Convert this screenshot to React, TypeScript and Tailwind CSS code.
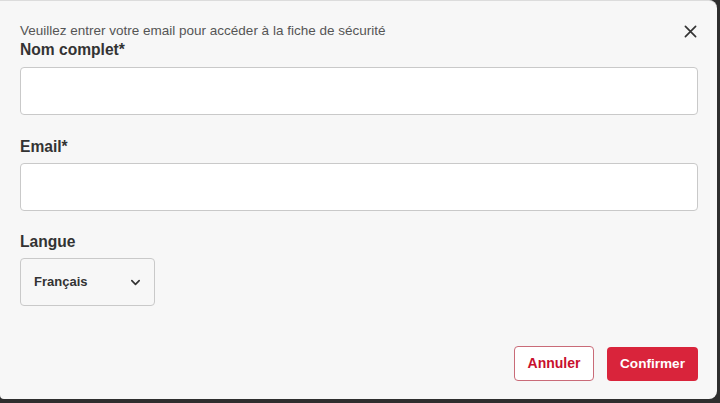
import React, { useState } from 'react';

const font = { fontFamily: '"Liberation Sans", Arial, sans-serif' };

const App: React.FC = () => {
  const [name, setName] = useState('');
  const [email, setEmail] = useState('');
  const [lang, setLang] = useState('fr');

  return (
    <div className="w-[720px] h-[403px] bg-[#2e2e2e] overflow-hidden" style={font}>
      <div className="w-[717px] h-[399px] bg-[#f7f7f7] rounded-r-lg rounded-bl-sm border-t border-[#dcdcdc] flex flex-col pl-5 pr-[19px] pt-[21px]">
        {/* Header */}
        <div className="flex items-start justify-between">
          <p className="text-[13.5px] leading-[18px] text-[#555]">
            Veuillez entrer votre email pour accéder à la fiche de sécurité
          </p>
          <button className="mt-[3px] mr-[1px] text-[#333]">
            <svg className="w-[13px] h-[13px]" viewBox="0 0 14 14" fill="none" stroke="currentColor" strokeWidth={1.8} strokeLinecap="round">
              <path d="M1.5 1.5l11 11M12.5 1.5l-11 11" />
            </svg>
          </button>
        </div>

        {/* Nom complet */}
        <label className="text-[15.6px] leading-[22px] font-bold text-[#333] mt-[-1px]">Nom complet*</label>
        <input
          value={name}
          onChange={e => setName(e.target.value)}
          className="mt-[6px] h-[48px] w-full bg-white border border-[#c9c9c9] rounded-[4px] px-3 outline-none"
        />

        {/* Email */}
        <label className="text-[15.6px] leading-[22px] font-bold text-[#333] mt-[21px]">Email*</label>
        <input
          value={email}
          onChange={e => setEmail(e.target.value)}
          className="mt-[5px] h-[48px] w-full bg-white border border-[#c9c9c9] rounded-[4px] px-3 outline-none"
        />

        {/* Langue */}
        <label className="text-[15.6px] leading-[22px] font-bold text-[#333] mt-[20px]">Langue</label>
        <div className="relative mt-[5px] w-[135px] h-[48px]">
          <select
            value={lang}
            onChange={e => setLang(e.target.value)}
            className="appearance-none w-full h-full bg-transparent border border-[#c9c9c9] rounded-[4px] pl-[13px] text-[13px] font-bold text-[#333] outline-none"
          >
            <option value="fr">Français</option>
            <option value="en">English</option>
          </select>
          <svg className="absolute right-[14px] top-[19px] w-[11px] h-[11px] pointer-events-none text-[#333]" viewBox="0 0 12 12" fill="none" stroke="currentColor" strokeWidth={1.8} strokeLinecap="round" strokeLinejoin="round">
            <path d="M2 4l4 4 4-4" />
          </svg>
        </div>

        {/* Actions */}
        <div className="flex justify-end items-end gap-[13px] mt-[40px]">
          <button className="w-[80px] h-[35px] border border-[#c96b78] rounded-[4px] bg-white text-[14px] font-bold text-[#c8102e]">
            Annuler
          </button>
          <button className="w-[91px] h-[34px] rounded-[4px] bg-[#d9243b] text-[13.6px] font-bold text-white">
            Confirmer
          </button>
        </div>
      </div>
    </div>
  );
};

export default App;
